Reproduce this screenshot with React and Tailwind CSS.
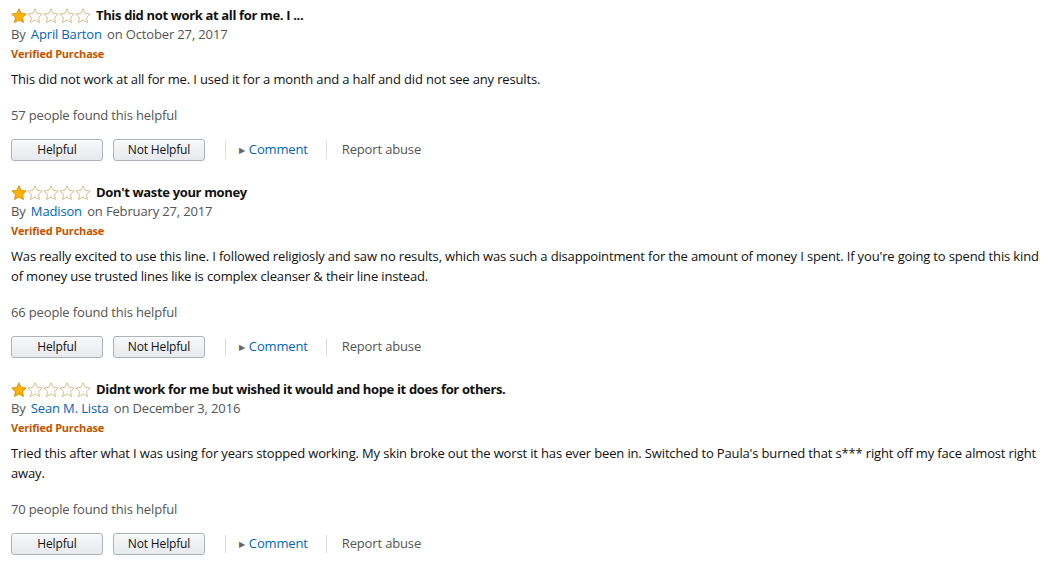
import React from "react";

const reviews = [
  {
    id: 1,
    title: "This did not work at all for me. I ...",
    author: "April Barton",
    date: "October 27, 2017",
    body: "This did not work at all for me. I used it for a month and a half and did not see any results.",
    helpful: 57,
  },
  {
    id: 2,
    title: "Don't waste your money",
    author: "Madison",
    date: "February 27, 2017",
    body: "Was really excited to use this line. I followed religiosly and saw no results, which was such a disappointment for the amount of money I spent. If you're going to spend this kind of money use trusted lines like is complex cleanser & their line instead.",
    helpful: 66,
  },
  {
    id: 3,
    title: "Didnt work for me but wished it would and hope it does for others.",
    author: "Sean M. Lista",
    date: "December 3, 2016",
    body: "Tried this after what I was using for years stopped working. My skin broke out the worst it has ever been in. Switched to Paula's burned that s*** right off my face almost right away.",
    helpful: 70,
  },
];

const Star = ({ filled }) => (
  <svg width="16" height="16" viewBox="0 0 24 24" className="block">
    <path
      d="M12 1.2l3.3 6.9 7.5.9-5.5 5.2 1.4 7.5L12 18l-6.7 3.7 1.4-7.5L1.2 9l7.5-.9z"
      fill={filled ? "#ffb000" : "#ffffff"}
      stroke={filled ? "#d08c00" : "#d4b27a"}
      strokeWidth="1.3"
      strokeLinejoin="round"
    />
  </svg>
);

const Stars = ({ rating }) => (
  <div className="flex">
    {[1, 2, 3, 4, 5].map((i) => (
      <Star key={i} filled={i <= rating} />
    ))}
  </div>
);

const VoteButton = ({ label }) => (
  <button className="w-[92px] h-[22px] rounded-[3px] border border-[#adb1b8] bg-gradient-to-b from-[#f7f8fa] to-[#e7e9ec] text-[12px] text-[#111] shadow-[0_1px_0_rgba(255,255,255,0.6)_inset]">
    {label}
  </button>
);

const Review = ({ review }) => (
  <div className="mb-[22px]">
    <div className="flex items-center gap-[5px] h-[19px]">
      <Stars rating={1} />
      <span className="font-bold text-[#111] tracking-[-0.35px]">{review.title}</span>
    </div>
    <div className="h-[19px] leading-[19px] text-[#555]">
      By <span className="mx-[2px] text-[#0066c0]">{review.author}</span> on {review.date}
    </div>
    <div className="h-[19px] leading-[19px] text-[11px] font-bold text-[#c45500] tracking-[-0.2px]">
      Verified Purchase
    </div>
    <p className="mt-[6px] leading-[20px] text-[#111] pr-[10px]">{review.body}</p>
    <div className="mt-[16px] h-[20px] leading-[20px] text-[#555]">
      {review.helpful} people found this helpful
    </div>
    <div className="mt-[14px] flex items-center">
      <VoteButton label="Helpful" />
      <div className="ml-[10px]">
        <VoteButton label="Not Helpful" />
      </div>
      <div className="ml-[20px] h-[18px] w-px bg-[#ddd]" />
      <span className="ml-[13px] text-[8px] text-[#666]">▶</span>
      <span className="ml-[4px] text-[#0066c0]">Comment</span>
      <div className="ml-[18px] h-[18px] w-px bg-[#ddd]" />
      <span className="ml-[15px] text-[#555]">Report abuse</span>
    </div>
  </div>
);

export default function App() {
  return (
    <div className="bg-white min-h-screen pl-[11px] pt-[6px] text-[13px] font-['Open_Sans',sans-serif] tracking-[-0.15px]">
      {reviews.map((r) => (
        <Review key={r.id} review={r} />
      ))}
    </div>
  );
}
